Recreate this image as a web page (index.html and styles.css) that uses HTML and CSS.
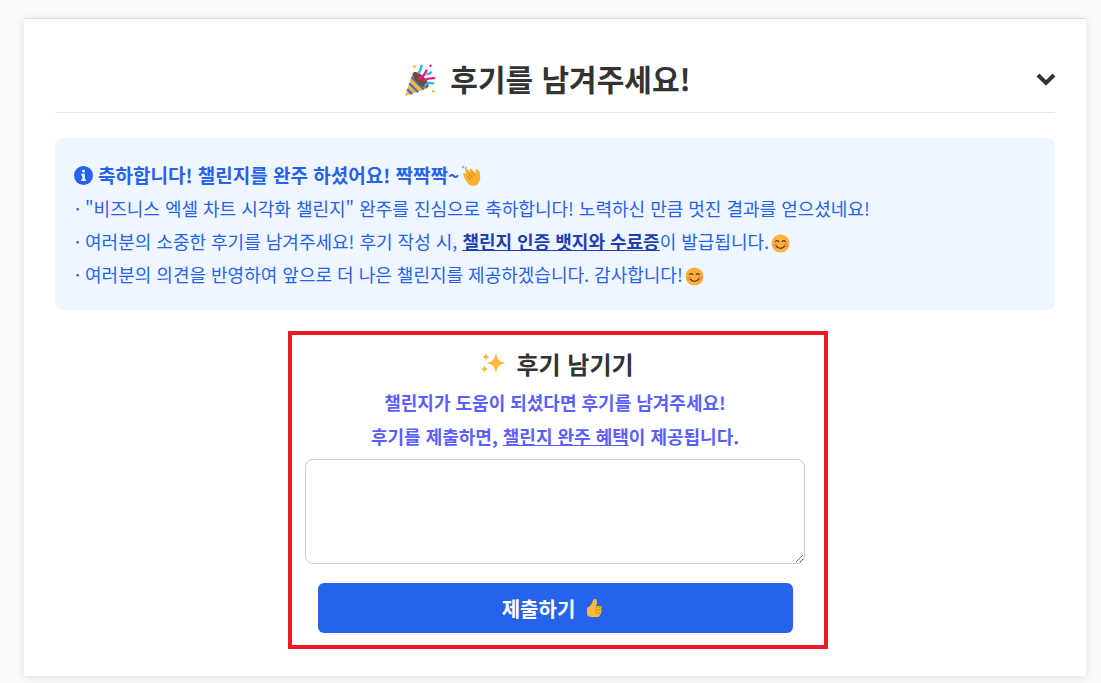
FILE: index.html
```html
<!doctype html>
<html lang="ko">
<head>
<meta charset="utf-8">
<title>후기를 남겨주세요</title>
<link rel="stylesheet" href="styles.css">
</head>
<body>
<div class="card">
  <div class="card-head">
    <h2 class="title">
      <svg class="emoji-party" viewBox="0 0 36 36"><path fill="#fdb93c" d="M1 35 9 11l16 16z"/><path fill="none" stroke="#4a6fc4" stroke-width="2.500" d="M3.500 28 8.500 33M5.500 21.500 15 31M8 15l13 13"/><path fill="#744a36" d="M10 10c3-2 9 2 13 7 3 4 4 8 2 9-3 1-8-2-12-7-3-4-5-7-3-9z"/><path fill="none" stroke="#ec1c8e" stroke-width="2.500" d="M15 17c5-2 8-6 9-10M21 19c3-3 7-3 12-3"/><path fill="none" stroke="#29b6f2" stroke-width="2.500" d="M15 11c3-2 2-5 4-9M22 25c1-4 5-5 10-3M24 12c3 0 4-1 5-3"/><circle cx="11" cy="4" r="1.500" fill="#f5b92e"/><circle cx="31" cy="30" r="1.500" fill="#f5b92e"/><circle cx="28" cy="3" r="1.300" fill="#ec1c8e"/></svg>
      <span>후기를 남겨주세요!</span>
    </h2>
    <svg class="chevron" viewBox="0 0 20 14"><path fill="none" stroke="#333" stroke-width="4" d="M2 3l8 8 8-8"/></svg>
  </div>

  <div class="notice">
    <p class="notice-title">
      <svg class="icon-info" viewBox="0 0 18 18"><circle cx="9" cy="9" r="9" fill="#2563eb"/><rect x="7.700" y="3.500" width="2.600" height="2.600" rx="1" fill="#eff6ff"/><path fill="#eff6ff" d="M6.800 7.400h3.500v5.200h1v1.700H6.800v-1.700h1v-3.500h-1z"/></svg>
      <span>축하합니다! 챌린지를 완주 하셨어요! 짝짝짝~</span>
      <svg class="emoji-clap" viewBox="0 0 20 20"><path fill="none" stroke="#5b9bd5" d="M1 3l2-2M4 4l1-2"/><path fill="#fbb034" d="M2 8c1-1 2 0 3 1L4 5c0-1 1-2 2-1l3 3-1-3c0-1 1-1 2 0l4 4c0-2 0-4 1-4s3 2 3 4c1 4 0 9-3 11-2 1-6 1-8-1C5 15 2 11 2 8z"/><path fill="none" stroke="#d98b12" d="M7 8l4 4M6 11l3 3M10 6l3 4"/></svg>
    </p>
    <p>· "비즈니스 엑셀 차트 시각화 챌린지" 완주를 진심으로 축하합니다! 노력하신 만큼 멋진 결과를 얻으셨네요!</p>
    <p>· 여러분의 소중한 후기를 남겨주세요! 후기 작성 시, <a class="notice-link">챌린지 인증 뱃지와 수료증</a>이 발급됩니다.<svg class="emoji" viewBox="0 0 20 20"><use href="#smile"/></svg></p>
    <p>· 여러분의 의견을 반영하여 앞으로 더 나은 챌린지를 제공하겠습니다. 감사합니다!<svg class="emoji" viewBox="0 0 20 20"><g id="smile"><circle cx="10" cy="10" r="9.500" fill="#fbb040"/><circle cx="4.500" cy="12" r="2.200" fill="#f58a4b"/><circle cx="15.500" cy="12" r="2.200" fill="#f58a4b"/><path fill="none" stroke="#4a3520" stroke-width="1.200" d="M4.500 8.500c1-2 3-2 4 0M11.500 8.500c1-2 3-2 4 0M5.500 12.500c2 3.500 7 3.500 9 0"/></g></svg></p>
  </div>

  <div class="review-box">
    <h3 class="review-title">
      <svg class="emoji-spark" viewBox="0 0 26 26"><path fill="#fdbb3b" d="M16 2c1 7 3 10 10 11-7 1-9 4-10 11-1-7-3-10-10-11 7-1 9-4 10-11z"/><path fill="#fdbb3b" d="M6 3c.5 2.500 1.500 3.500 4 4-2.500.5-3.500 1.500-4 4-.5-2.500-1.500-3.500-4-4 2.500-.5 3.500-1.500 4-4zM4.500 15c.5 2.500 1.500 3.500 4 4-2.500.5-3.500 1.500-4 4-.5-2.500-1.500-3.500-4-4 2.500-.5 3.500-1.500 4-4z"/></svg>
      <span>후기 남기기</span>
    </h3>
    <p class="review-text">챌린지가 도움이 되셨다면 후기를 남겨주세요!</p>
    <p class="review-text">후기를 제출하면, <u>챌린지 완주 혜택</u>이 제공됩니다.</p>
    <textarea class="review-input"></textarea>
    <button class="submit-btn">제출하기
      <svg class="emoji-thumb" viewBox="0 0 20 20"><path fill="#fdb93c" d="M3 10c2-1 4-3 5-5 1-2 1-4 3-4s2 2 2 4l-1 3h4c2 0 2 2 1 3 1 1 1 2 0 3 .5 1 0 2-1 2.500 0 1.500-1 2.500-2 2.500H8c-3 0-5-1-5-3z"/><path fill="none" stroke="#d98b12" d="M11 9h6M11 12h6M11 15h5"/></svg>
    </button>
  </div>
</div>
</body>
</html>
```

FILE: styles.css
```css
* {
	box-sizing: border-box;
}
body {
	margin: 0;
	padding: 18px 15px 7px 24px;
	background-color: #f9fafb;
	font-family: "Noto Sans CJK KR", "Noto Sans", sans-serif;
	color: #333;
}
p {
	margin: 0;
}
.card {
	height: 658px;
	padding: 31px 31px 0;
	background-color: #fff;
	border-top: 1px solid #dcdcdc;
	box-shadow: 0 2px 8px rgba(0, 0, 0, 0.1);
}
/* ---------- 제목 ------------- */
.card-head {
	position: relative;
	height: 63px;
	border-bottom: 1px solid #e5e5e5;
}
.title {
	display: flex;
	justify-content: center;
	align-items: center;
	gap: 12px;
	height: 56px;
	margin: 0;
	padding-right: 15px;
	font-size: 30px;
	font-weight: 700;
	color: #333;
}
.emoji-party {
	width: 34px;
	height: 34px;
	margin-top: 4px;
}
.chevron {
	position: absolute;
	top: 22px;
	right: -1px;
	width: 20px;
	height: 14px;
}
/* ---------- 안내 ------------- */
.notice {
	display: flex;
	flex-direction: column;
	gap: 7.100px;
	height: 172px;
	margin-top: 25px;
	padding: 24px 20px;
	background-color: #eff6ff;
	border-radius: 8px;
	font-size: 18px;
	line-height: 26px;
	color: #2563eb;
}
.notice-title {
	display: flex;
	align-items: center;
	font-size: 19px;
	font-weight: 700;
}
.icon-info {
	width: 19px;
	height: 19px;
	margin-left: -1px;
	margin-right: 5px;
}
.emoji {
	display: inline-block;
	width: 19px;
	height: 19px;
	margin-left: 2px;
	vertical-align: -4px;
}
.emoji-clap {
	width: 21px;
	height: 21px;
	margin-left: 2px;
}
.notice-link {
	font-weight: 700;
	text-decoration: underline;
	color: #1e40af;
}
/* ---------- 후기 ------------- */
.review-box {
	display: flex;
	flex-direction: column;
	align-items: center;
	width: 540px;
	height: 318px;
	margin: 21px 0 0 233px;
	padding: 12px 19px 0 13px;
	border: 4px solid #ed1c24;
}
.review-title {
	display: flex;
	align-items: center;
	gap: 10px;
	height: 32px;
	margin: 0 0 10px;
	padding-left: 4px;
	font-size: 24px;
	font-weight: 700;
	color: #333;
}
.emoji-spark {
	width: 26px;
	height: 26px;
}
.review-text {
	font-size: 18px;
	font-weight: 700;
	line-height: 27px;
	margin-bottom: 7px;
	color: #5b5fff;
}
.review-input {
	display: block;
	flex: none;
	width: 500px;
	height: 105px;
	margin-top: 2px;
	border: 1px solid #ccc;
	border-radius: 8px;
	background-color: #fff;
}
.submit-btn {
	display: flex;
	justify-content: center;
	align-items: center;
	gap: 9px;
	flex: none;
	width: 475px;
	height: 50px;
	margin-top: 19px;
	padding: 0 10px 0 6px;
	border: 0;
	border-radius: 6px;
	background-color: #2563eb;
	font-family: inherit;
	font-size: 20px;
	font-weight: 700;
	color: #fff;
}
.emoji-thumb {
	width: 20px;
	height: 20px;
}
```
